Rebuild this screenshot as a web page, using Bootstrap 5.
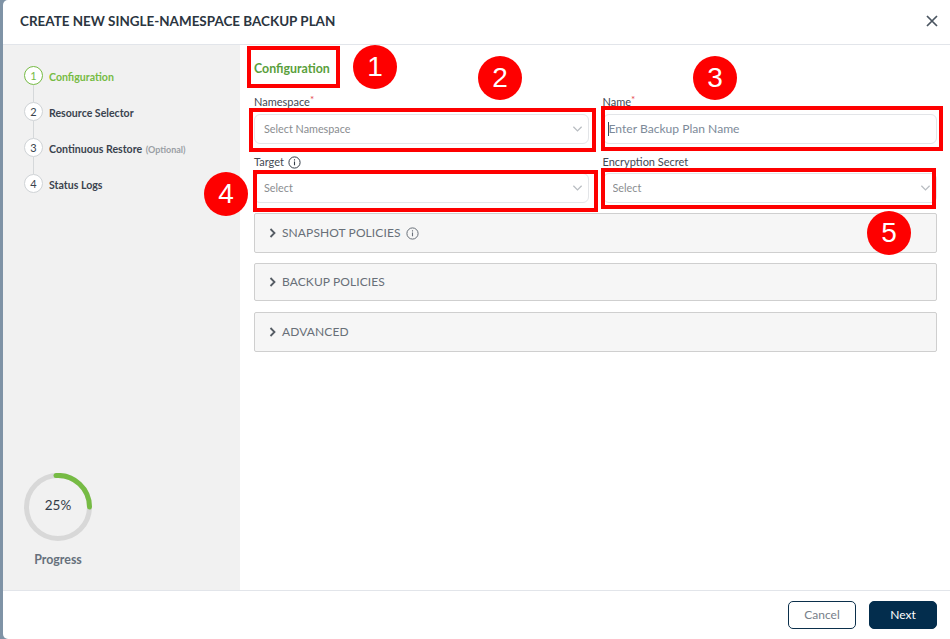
<!DOCTYPE html>
<html lang="en">
<head>
<meta charset="utf-8">
<title>Create backup plan</title>
<link href="https://cdn.jsdelivr.net/npm/bootstrap@5.3.0/dist/css/bootstrap.min.css" rel="stylesheet">
<style>
html,body{height:100%;overflow:hidden}
body{font-family:Lato,"Liberation Sans",sans-serif;background:#7f93a6;padding-left:3px;color:#333c48}
.shell{height:639px;position:relative;background:#fff;border-radius:5px 0 0 5px;border:0}
.shell .modal-header{height:45px;padding:0 12px 2px 17px;border-bottom:1px solid #e2e5ea}
.plan-title{font-size:13.45px;font-weight:700;color:#2b3540;margin:0}
.closer{background:none;border:0;padding:0;line-height:0;color:#4a5560}
.mainrow{min-height:0}
.sidebar{width:237px;background:#f1f1f1;padding:20px 0 0 21px}
.stepitem{height:36px;font-size:10.6px;font-weight:700;color:#3a434e;position:relative;gap:6px}
.steptext{margin-top:5px}
.stepnum{width:19px;height:19px;margin-top:1px;border-radius:50%;background:#fff;border:1px solid #cfd3d6;font-weight:400;font-size:11px;line-height:17px;text-align:center;color:#3a434e;flex:none;position:relative;z-index:1}
.stepitem:not(:last-child)::after{content:"";position:absolute;left:9px;top:20px;height:17px;border-left:1px solid #d5d8da}
.stepnow{color:#76bb44}
.stepnow .stepnum{border-color:#76bb44;color:#76bb44}
.optional{font-size:9px;color:#9a9fa5;font-weight:700;margin-left:1px}
.ring{width:68px;margin-bottom:21px;position:relative}
.ringtext{position:absolute;top:24px;left:0;width:68px;text-align:center;font-size:13.5px;color:#333c48;line-height:17px}
.ringlabel{font-size:12.4px;line-height:18px;font-weight:700;color:#66707c;width:68px;text-align:center;margin-top:10px}
.formpane{padding:0 13px 0 14px}
.sectionname{font-size:12.4px;font-weight:700;color:#5a9f3c;line-height:15px;margin:16px 0 19px}
.fields{--bs-gutter-x:14px;--bs-gutter-y:0}
.fieldlabel{font-size:11px;color:#3f4853;line-height:14px;margin:0 0 5px;display:flex;align-items:center;gap:4px;height:14px}
.fieldlabel.lower{position:relative;top:1px}
.req{color:#e5484d;font-size:10px;margin-left:-4px;position:relative;top:-3px}
.fieldbox{height:30px;font-size:10.8px;padding:0 9px;border:1px solid #e3e5e8;border-radius:6px;box-shadow:none;margin-bottom:10px}
.form-select.fieldbox{color:#8a8d90;background-image:url("data:image/svg+xml,%3csvg xmlns='http://www.w3.org/2000/svg' viewBox='0 0 12 8'%3e%3cpath fill='none' stroke='%23b9bdc2' stroke-width='1.4' d='M1.5 1.5 6 6l4.5-4.5'/%3e%3c/svg%3e");background-size:11px 8px;background-position:right 5px center}
.form-control.fieldbox{padding-left:5px;font-size:12.1px;padding-bottom:2px}
.form-control.fieldbox::placeholder{color:#7d8a99;opacity:1}
.caretwrap{position:relative}
.caretmark{position:absolute;left:5px;top:8px;height:14px;border-left:1px solid #3b4a5a}
.panelbar{height:39px;margin-bottom:11px;background:#f6f6f6;border:1px solid #cfcfcf;border-radius:2px;padding-left:14px;font-size:12px;color:#686f78;letter-spacing:.1px;gap:5px}
.panelbar .chev{margin-right:1px}
.panelbar.first{height:40px;margin-bottom:10px}
.panelbar.slim{height:38px}
.panelbar.tall{height:40px}
.shell .modal-footer{height:49px;padding:0 13px 0 0;border-top:1px solid #e2e5ea;gap:13px}
.shell .modal-footer>*{margin:0}
.actbtn{width:68px;height:28px;padding:0;font-size:12px;border-radius:5px;line-height:26px}
.actcancel{background:#fff;border:1px solid #0b2f4b;color:#77808a}
.actnext{background:#032d4d;border:1px solid #032d4d;color:#fff}
.mark-box{position:absolute;border:4px solid #fe0000;pointer-events:none}
.mb1{left:244px;top:46px;width:93px;height:42px}
.mb2{left:246px;top:108px;width:347px;height:44px}
.mb3{left:598px;top:106px;width:342px;height:45px}
.mb4{left:250px;top:170px;width:345px;height:42px}
.mb5{left:598px;top:168px;width:335px;height:41px}
.dot{position:absolute;width:44px;height:44px;border-radius:50%;background:#fe0000;color:#fff;font-family:"Liberation Sans",Arial,sans-serif;font-size:28px;line-height:44px;text-align:center}
.d1{left:350px;top:45px}
.d2{left:475px;top:56px}
.d3{left:690px;top:56px}
.d4{left:201px;top:172px}
.d5{left:864px;top:211px}
</style>
</head>
<body>
<div class="modal-content shell d-flex flex-column">
  <div class="modal-header d-flex justify-content-between align-items-center flex-shrink-0">
    <h5 class="plan-title">CREATE NEW SINGLE-NAMESPACE BACKUP PLAN</h5>
    <button class="closer" type="button" aria-label="Close"><svg width="12" height="12" viewBox="0 0 12 12"><path d="M1 1l10 10M11 1 1 11" stroke="currentColor" stroke-width="1.7" fill="none"/></svg></button>
  </div>
  <div class="mainrow d-flex flex-grow-1">
    <aside class="sidebar d-flex flex-column justify-content-between flex-shrink-0">
      <div>
        <div class="stepitem stepnow d-flex align-items-start"><span class="stepnum">1</span><span class="steptext">Configuration</span></div>
        <div class="stepitem d-flex align-items-start"><span class="stepnum">2</span><span class="steptext">Resource Selector</span></div>
        <div class="stepitem d-flex align-items-start"><span class="stepnum">3</span><span class="steptext">Continuous Restore <span class="optional">(Optional)</span></span></div>
        <div class="stepitem d-flex align-items-start"><span class="stepnum">4</span><span class="steptext">Status Logs</span></div>
      </div>
      <div class="ring">
        <svg width="68" height="68" viewBox="0 0 68 68" class="d-block"><circle cx="34" cy="34" r="31.5" fill="none" stroke="#d8d8d8" stroke-width="5"/><path d="M32 2.5A31.5 31.5 0 0 1 65.5 34" fill="none" stroke="#76bb44" stroke-width="5" stroke-linecap="round"/></svg>
        <div class="ringtext">25%</div>
        <div class="ringlabel">Progress</div>
      </div>
    </aside>
    <main class="formpane flex-grow-1">
      <div class="sectionname">Configuration</div>
      <div class="row fields">
        <div class="col-6">
          <label class="fieldlabel">Namespace<span class="req">*</span></label>
          <select class="form-select fieldbox"><option>Select Namespace</option></select>
          <label class="fieldlabel lower">Target <svg width="13" height="13" viewBox="0 0 13 13"><circle cx="6.5" cy="6.5" r="5.6" fill="none" stroke="#333c48"/><path d="M6.5 5.6v3.7M6.5 3.2v1.3" stroke="#333c48" stroke-width="1.1"/></svg></label>
          <select class="form-select fieldbox"><option>Select</option></select>
        </div>
        <div class="col-6">
          <label class="fieldlabel">Name<span class="req">*</span></label>
          <div class="caretwrap"><input class="form-control fieldbox" type="text" placeholder="Enter Backup Plan Name"><span class="caretmark"></span></div>
          <label class="fieldlabel lower">Encryption Secret</label>
          <select class="form-select fieldbox"><option>Select</option></select>
        </div>
      </div>
      <div class="panelbar first d-flex align-items-center"><svg class="chev" width="7" height="10" viewBox="0 0 7 10"><path d="M1.5 1l4 4-4 4" fill="none" stroke="#555c64" stroke-width="1.8"/></svg><span>SNAPSHOT POLICIES</span><svg width="13" height="13" viewBox="0 0 13 13"><circle cx="6.5" cy="6.5" r="5.6" fill="none" stroke="#686f78"/><path d="M6.5 5.6v3.7M6.5 3.2v1.3" stroke="#686f78" stroke-width="1.1"/></svg></div>
      <div class="panelbar slim d-flex align-items-center"><svg class="chev" width="7" height="10" viewBox="0 0 7 10"><path d="M1.5 1l4 4-4 4" fill="none" stroke="#555c64" stroke-width="1.8"/></svg><span>BACKUP POLICIES</span></div>
      <div class="panelbar tall d-flex align-items-center"><svg class="chev" width="7" height="10" viewBox="0 0 7 10"><path d="M1.5 1l4 4-4 4" fill="none" stroke="#555c64" stroke-width="1.8"/></svg><span>ADVANCED</span></div>
    </main>
  </div>
  <div class="modal-footer d-flex justify-content-end align-items-center flex-shrink-0">
    <button type="button" class="btn actbtn actcancel">Cancel</button>
    <button type="button" class="btn actbtn actnext">Next</button>
  </div>
  <div class="mark-box mb1"></div>
  <div class="mark-box mb2"></div>
  <div class="mark-box mb3"></div>
  <div class="mark-box mb4"></div>
  <div class="mark-box mb5"></div>
  <div class="dot d1">1</div>
  <div class="dot d2">2</div>
  <div class="dot d3">3</div>
  <div class="dot d4">4</div>
  <div class="dot d5">5</div>
</div>
<script src="https://cdn.jsdelivr.net/npm/bootstrap@5.3.0/dist/js/bootstrap.bundle.min.js"></script>
</body>
</html>
